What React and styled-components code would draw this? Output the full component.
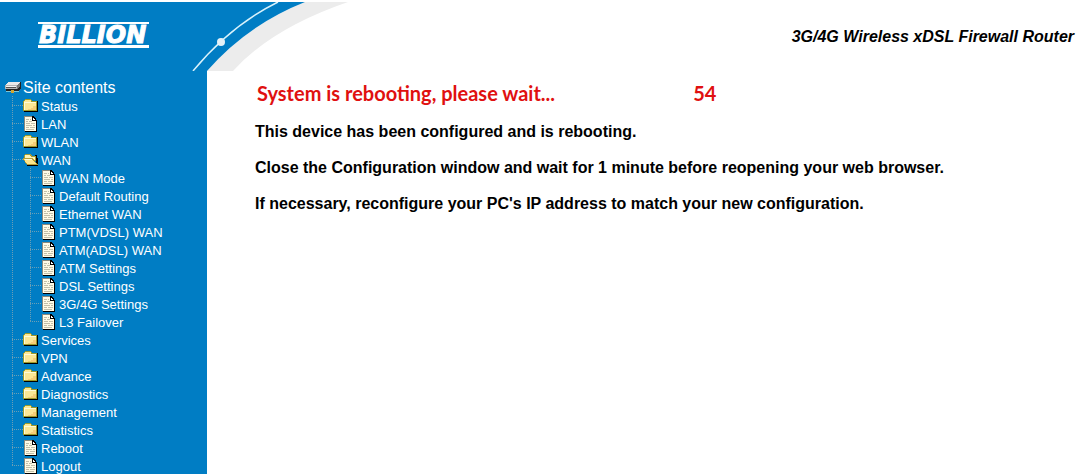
import React from "react";
import styled, { createGlobalStyle } from "styled-components";

const BLUE = "#007dc4";
const LINE = "#6b9fb5";

const GlobalStyle = createGlobalStyle`
  * { box-sizing: border-box; }
  body {
    margin: 0;
    background: #fff;
    color: #000;
    font-family: "Liberation Sans", Arial, sans-serif;
  }
`;

const Page = styled.div`
  display: flex;
  flex-direction: column;
  min-height: 100vh;
  padding-top: 2px;
`;

const Header = styled.header`
  display: flex;
  align-items: center;
  justify-content: space-between;
  padding-right: 4px;
`;

const Banner = styled.svg`
  display: block;
  flex: none;
`;

const Wordmark = styled.text`
  font-family: "DejaVu Sans", "Liberation Sans", sans-serif;
  font-size: 24px;
  font-weight: bold;
  font-style: italic;
  fill: #fff;
  stroke: #fff;
  stroke-width: 1px;
`;

const ProductName = styled.p`
  margin: 0;
  font-size: 16px;
  line-height: 20px;
  font-weight: bold;
  font-style: italic;
`;

const Body = styled.div`
  display: flex;
  flex: 1;
`;

const Sidebar = styled.nav`
  flex: none;
  width: 207px;
  padding-top: 7px;
  background: ${BLUE};
  color: #fff;
`;

const Root = styled.div`
  display: flex;
  align-items: center;
  gap: 2px;
  height: 18px;
  padding-left: 5px;
  font-size: 16px;
  line-height: 18px;
`;

const Tree = styled.ul`
  margin: 0;
  padding: 0 0 0 ${(p) => (p.$nested ? 18 : 12)}px;
  list-style: none;
`;

const Item = styled.li`
  background-image:
    repeating-linear-gradient(to bottom, ${LINE} 0 1px, transparent 1px 2px),
    repeating-linear-gradient(to right, ${LINE} 0 1px, transparent 1px 2px);
  background-repeat: no-repeat;
  background-position: 0 0, 0 9px;
  background-size: 1px 100%, 11px 1px;

  &:last-child {
    background-size: 1px 10px, 11px 1px;
  }
`;

const ItemLink = styled.a`
  display: grid;
  grid-template-columns: 18px 1fr;
  align-items: center;
  height: 18px;
  margin-left: 11px;
  color: #fff;
  font-size: 13px;
  line-height: 18px;
  text-decoration: none;
  white-space: nowrap;
`;

const Label = styled.span`
  padding-top: 2px;
`;

const Main = styled.main`
  flex: 1;
  padding: 4px 16px 16px 48px;
`;

const Status = styled.h1`
  display: flex;
  gap: 138px;
  margin: 0 0 3px;
  padding-left: 2px;
  color: #e01010;
  font-family: Lato, "Open Sans", sans-serif;
  font-size: 20px;
  line-height: 36px;
  font-weight: bold;
`;

const Message = styled.p`
  margin: 0;
  font-size: 16px;
  line-height: 36px;
  font-weight: bold;
`;

const PixelIcon = styled.svg.attrs({
  width: 16,
  height: 16,
  viewBox: "0 0 16 16",
  shapeRendering: "crispEdges",
  "aria-hidden": true,
})`
  display: block;
`;

function FolderIcon() {
  return (
    <PixelIcon>
      <path d="M1 3h14v11H1z" fill="#000" />
      <path d="M0 3L2 1h5l2 2h5v10H0z" fill="#9c9a2a" />
      <path d="M1 3L2 2h5l1 1v1h5v8H1z" fill="#fbe795" />
      <path d="M1 4h12v1H1zM1 4h1v8H1z" fill="#fffbd8" />
      <path d="M10 8h3v4H5v-1h3v-1h2z" fill="#f5cd78" />
    </PixelIcon>
  );
}

function OpenFolderIcon() {
  return (
    <PixelIcon>
      <path d="M12 3h2v3h1v8H4v-1h9z" fill="#000" />
      <path d="M1 3l1-1h5l2 2h4v5H4v2H3L1 9z" fill="#a29b35" />
      <path d="M2 3h5l1 2h4v3H2z" fill="#fff4b8" />
      <path d="M0 6h10l5 7H4L0 7z" fill="#b59f36" />
      <path d="M1 7h8l4 5H4z" fill="#fbe58d" />
      <path d="M1 7h8v1H2z" fill="#fffbd8" />
    </PixelIcon>
  );
}

function DocumentIcon() {
  return (
    <PixelIcon>
      <path d="M2 1h8l4 4v11H2z" fill="#000" />
      <path d="M1 0h9l3 4v11H1z" fill="#8b897c" />
      <path d="M2 1h7v4h4v10H2z" fill="#fffbe6" />
      <path d="M9 0h1l3 3v2H9z" fill="#000" />
      <path d="M10 2l2 2h-2z" fill="#fff" />
      <path
        d="M3 3h3v1H3zM7 3h1v1H7zM3 5h2v1H3zM6 5h3v1H6zM3 7h4v1H3zM8 7h4v1H8zM3 9h6v1H3zM10 9h2v1h-2zM3 11h3v1H3zM7 11h5v1H7zM3 13h8v1H3z"
        fill="#c2c0aa"
      />
    </PixelIcon>
  );
}

function DeviceIcon() {
  return (
    <PixelIcon>
      <path d="M4 3h12v6l-3 3H1V6z" fill="#222" />
      <path d="M4 3h11l-3 3H0z" fill="#e9e9e9" />
      <path d="M0 6h12v4H0z" fill="#b5b5b5" />
      <path d="M12 6l3-3v4l-3 3z" fill="#777" />
      <path d="M1 8h10v1H1z" fill="#555" />
      <path d="M1 7h10v1H1z" fill="#f4f4f4" />
      <path d="M1 12h5v1H1zM9 12h5v1H9z" fill="#79c6d8" />
      <path d="M6 11h3v3H6z" fill="#d3a52e" />
    </PixelIcon>
  );
}

const icons = { folder: FolderIcon, open: OpenFolderIcon, page: DocumentIcon };

const page = (label) => ({ label, icon: "page" });
const folder = (label) => ({ label, icon: "folder" });

const contents = [
  folder("Status"),
  page("LAN"),
  folder("WLAN"),
  {
    label: "WAN",
    icon: "open",
    children: [
      page("WAN Mode"),
      page("Default Routing"),
      page("Ethernet WAN"),
      page("PTM(VDSL) WAN"),
      page("ATM(ADSL) WAN"),
      page("ATM Settings"),
      page("DSL Settings"),
      page("3G/4G Settings"),
      page("L3 Failover"),
    ],
  },
  folder("Services"),
  folder("VPN"),
  folder("Advance"),
  folder("Diagnostics"),
  folder("Management"),
  folder("Statistics"),
  page("Reboot"),
  page("Logout"),
];

function TreeList({ items, nested }) {
  return (
    <Tree $nested={nested}>
      {items.map((item) => {
        const Icon = icons[item.icon];
        return (
          <Item key={item.label}>
            <ItemLink href="#">
              <Icon />
              <Label>{item.label}</Label>
            </ItemLink>
            {item.children && <TreeList items={item.children} nested />}
          </Item>
        );
      })}
    </Tree>
  );
}

function BrandBanner() {
  return (
    <Banner width="350" height="69" viewBox="0 2 350 69">
      <path d="M207 71Q247 25 305 2H348Q272 28 233 71Z" fill="#ececec" />
      <path d="M0 2H305Q247 25 207 71H0Z" fill={BLUE} />
      <path d="M193 71Q231 25 278 2" fill="none" stroke="#d8f2fb" strokeWidth="1.5" />
      <circle cx="221" cy="42" r="4" fill="#e4f1f7" />
      <path d="M38 22H149V24H38ZM38 45H149V48H38Z" fill="#fff" />
      <Wordmark x="39" y="43">BILLION</Wordmark>
    </Banner>
  );
}

export default function App() {
  return (
    <>
      <GlobalStyle />
      <Page>
        <Header>
          <BrandBanner />
          <ProductName>3G/4G Wireless xDSL Firewall Router</ProductName>
        </Header>
        <Body>
          <Sidebar aria-label="Site contents">
            <Root>
              <DeviceIcon />
              <Label>Site contents</Label>
            </Root>
            <TreeList items={contents} />
          </Sidebar>
          <Main>
            <Status>
              <span>System is rebooting, please wait...</span>
              <span>54</span>
            </Status>
            <Message>This device has been configured and is rebooting.</Message>
            <Message>
              Close the Configuration window and wait for 1 minute before reopening your web browser.
            </Message>
            <Message>
              If necessary, reconfigure your PC's IP address to match your new configuration.
            </Message>
          </Main>
        </Body>
      </Page>
    </>
  );
}
